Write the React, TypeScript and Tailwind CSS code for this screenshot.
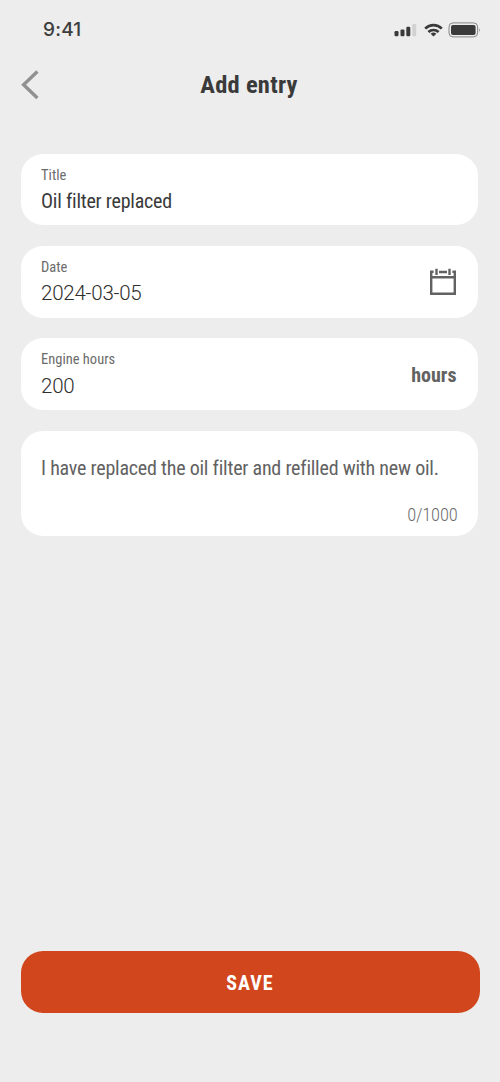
import type { ReactNode } from 'react';

function StatusBar() {
  return (
    <div className="flex h-[60px] items-center justify-between pl-[43px] pr-[19px]">
      <span className="font-['Inter'] text-[19px] font-medium tracking-[0.2px] text-[#3d3d3d]">9:41</span>
      <svg width="88" height="16" viewBox="0 0 88 16" fill="#3a3a3a">
        <rect x="1.5" y="9" width="4" height="5.2" rx="1.2" />
        <rect x="7.5" y="7.4" width="4" height="6.8" rx="1.2" />
        <rect x="13.3" y="4.8" width="4" height="9.4" rx="1.2" />
        <rect x="19.2" y="2" width="4" height="12.2" rx="1.2" fill="#d2d2d2" />
        <g fill="none" stroke="#3a3a3a" strokeWidth="2.7">
          <path d="M32.2 6.6 C36.8 1.9 44.2 1.9 48.8 6.6" />
          <path d="M35.4 10 C38.3 7.3 42.7 7.3 45.6 10" />
        </g>
        <path d="M37.6 11.7 Q40.5 9.4 43.4 11.7 L40.5 14.4 Z" />
        <rect x="56" y="0.9" width="28.6" height="14" rx="4" fill="none" stroke="#858585" />
        <rect x="58" y="2.9" width="24.6" height="10" rx="2" />
        <path d="M86 6 Q87.8 8 86 10 Z" fill="#8c8c8c" />
      </svg>
    </div>
  );
}

type FieldProps = {
  label: string;
  value: string;
  numeric?: boolean;
  children?: ReactNode;
};

function Field({ label, value, numeric, children }: FieldProps) {
  return (
    <div className="flex h-[71.6px] items-center justify-between rounded-[22px] bg-white pl-[20.5px] pr-[21.5px]">
      <div className="flex flex-col pt-[1.5px]">
        <span className="text-[14.5px] leading-5 text-[#6b6b6b]">{label}</span>
        <span
          className={
            numeric
              ? 'mt-[1.5px] text-[20.5px] leading-7 font-light tracking-[-0.22px] text-[#2e2e2e] [font-stretch:92%]'
              : 'mt-[1.5px] text-[20px] leading-7 tracking-[-0.22px] text-[#3a3a3a]'
          }
        >
          {value}
        </span>
      </div>
      {children}
    </div>
  );
}

export default function App() {
  return (
    <div className="flex h-[1082px] w-[500px] flex-col bg-[#ededed] font-['Roboto',sans-serif] whitespace-nowrap [font-stretch:75%]">
      <StatusBar />
      <header className="grid h-[50px] grid-cols-[60px_1fr_60px] items-center">
        <button className="pl-[21px]" aria-label="Back">
          <svg width="18" height="30" viewBox="0 0 18 30" fill="none" stroke="#919191" strokeWidth="3.4">
            <path d="M16.4 1.5 L2.6 14.7 L16.4 27.9" />
          </svg>
        </button>
        <h1 className="pr-0.5 text-center text-[24.5px] leading-8 font-bold tracking-[0.25px] text-[#3a3a3a]">Add entry</h1>
      </header>

      <main className="mt-[43.8px] flex flex-1 flex-col gap-[20.7px] pr-[22px] pl-[20.5px]">
        <Field label="Title" value="Oil filter replaced" />
        <Field label="Date" value="2024-03-05" numeric>
          <svg className="mr-px" width="26" height="27" viewBox="0 0 26 27" fill="none" stroke="#626262" strokeWidth="2.4">
            <path d="M3.6 3.8 H1.2 V25.8 H24.8 V3.8 H22.4 M1 9.2 H25 M9 4 H17 M6.5 0.8 V7 M19.5 0.8 V7" />
          </svg>
        </Field>
        <Field label="Engine hours" value="200" numeric>
          <span className="pt-0.5 text-[20px] font-bold text-[#626262]">hours</span>
        </Field>
        <div className="flex h-[105px] flex-col justify-between rounded-[22px] bg-white px-[20.5px]">
          <p className="pt-[25px] text-[20px] leading-6 tracking-[-0.22px] text-[#626262]">
            I have replaced the oil filter and refilled with new oil.
          </p>
          <span className="pb-[9px] text-right text-[18.5px] leading-6 font-light tracking-[-0.2px] text-[#6e6e6e] [font-stretch:84%]">
            0/1000
          </span>
        </div>
      </main>

      <footer className="px-[20.5px] pb-[69px]">
        <button className="h-[62px] w-full rounded-[22px] bg-[#d1461c] pt-0.5 text-[20px] font-bold tracking-[1px] text-white">
          SAVE
        </button>
      </footer>
    </div>
  );
}
